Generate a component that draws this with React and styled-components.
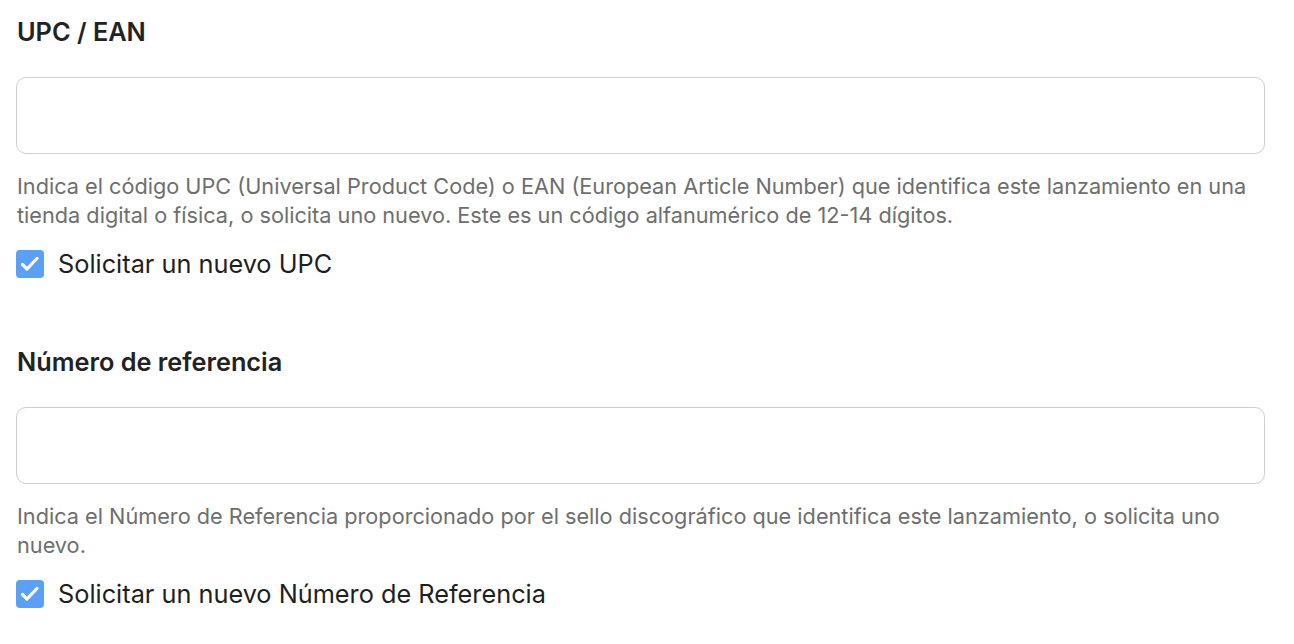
import styled, { createGlobalStyle } from "styled-components";

const Global = createGlobalStyle`
  body {
    margin: 0;
    background: #ffffff;
    font-family: Inter, "Noto Sans", sans-serif;
  }
`;

const Page = styled.div`
  padding: 14px 29px 0 16px;
  display: flex;
  flex-direction: column;
  gap: 64px;
`;

const Field = styled.section`
  display: flex;
  flex-direction: column;
`;

const Title = styled.h2`
  margin: 0 0 27px 1px;
  font-size: 25.3px;
  line-height: 36px;
  font-weight: 600;
  color: #222222;
`;

const Input = styled.input`
  box-sizing: border-box;
  width: 100%;
  height: 77px;
  border: 1px solid #cfcfcf;
  border-radius: 10px;
  outline: none;
  padding: 0 20px;
  font-family: inherit;
  font-size: 20px;
`;

const Help = styled.p`
  margin: 18px 0 0 1px;
  font-size: 21.7px;
  line-height: 29px;
  color: #6e6e6e;
`;

const CheckRow = styled.label`
  display: flex;
  align-items: center;
  gap: 14px;
  margin-top: 18px;
  font-size: 25.3px;
  line-height: 32px;
  color: #1f1f1f;
`;

const Box = styled.span`
  width: 28px;
  height: 28px;
  border-radius: 4px;
  background: #5ba0f2;
  display: flex;
  align-items: center;
  justify-content: center;
  flex-shrink: 0;
`;

function Check() {
  return (
    <Box>
      <svg width="28" height="28" viewBox="0 0 28 28" fill="none">
        <path d="M6.5 14.5l4.5 4.5 10-10.5" stroke="#fff" strokeWidth="3.2" strokeLinecap="round" strokeLinejoin="round" />
      </svg>
    </Box>
  );
}

function App() {
  return (
    <>
      <Global />
      <Page>
        <Field>
          <Title>UPC / EAN</Title>
          <Input />
          <Help>
            Indica el código UPC (Universal Product Code) o EAN (European Article Number) que identifica este lanzamiento en una tienda digital o física, o solicita uno nuevo. Este es un código alfanumérico de 12-14 dígitos.
          </Help>
          <CheckRow>
            <Check />
            Solicitar un nuevo UPC
          </CheckRow>
        </Field>
        <Field>
          <Title>Número de referencia</Title>
          <Input />
          <Help>
            Indica el Número de Referencia proporcionado por el sello discográfico que identifica este lanzamiento, o solicita uno nuevo.
          </Help>
          <CheckRow>
            <Check />
            Solicitar un nuevo Número de Referencia
          </CheckRow>
        </Field>
      </Page>
    </>
  );
}

export default App;
